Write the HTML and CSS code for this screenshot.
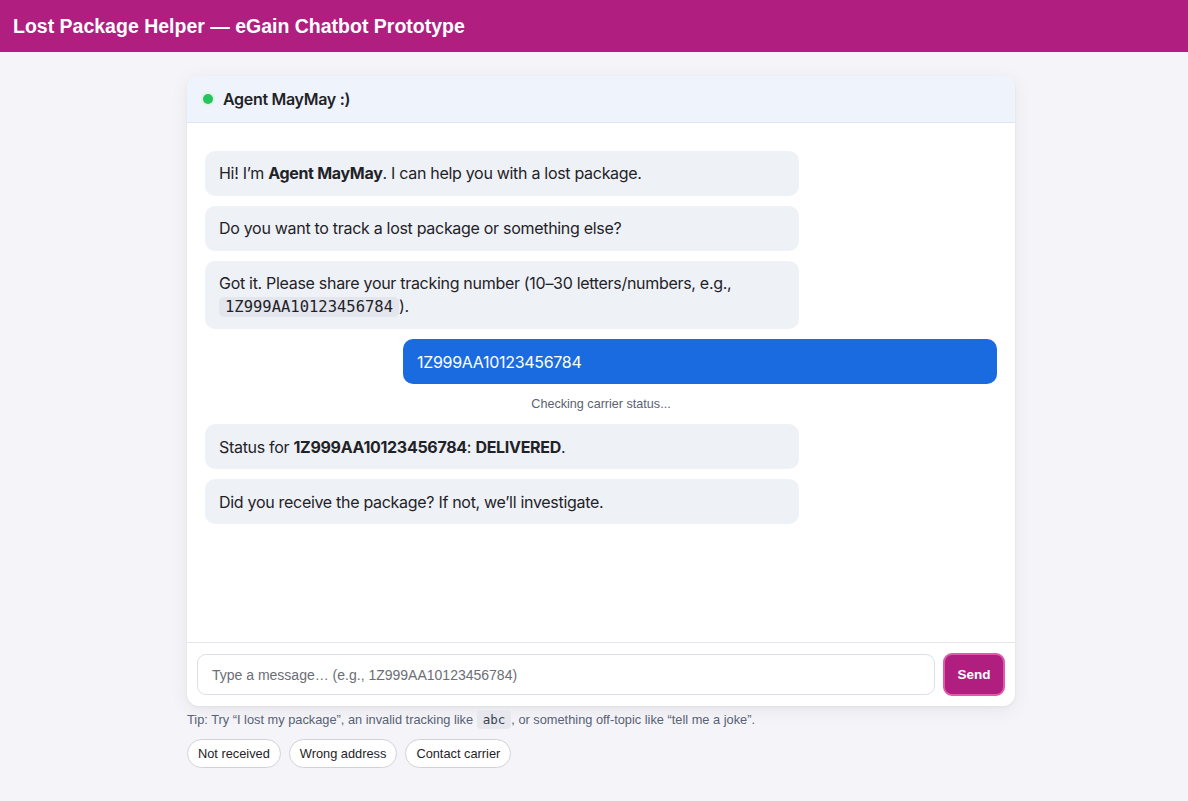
FILE: index.html
```html
<!DOCTYPE html>
<html lang="en">
<head>
<meta charset="utf-8">
<title>Lost Package Helper</title>
<link rel="stylesheet" href="styles.css">
</head>
<body>
<header class="topbar"><h1 class="title">Lost Package Helper — eGain Chatbot Prototype</h1></header>
<main class="main">
  <section class="card">
    <div class="card-head"><span class="dot"></span><span class="agent">Agent MayMay :)</span></div>
    <div class="messages">
      <div class="bubble bot">Hi! I’m <b>Agent MayMay</b>. I can help you with a lost package.</div>
      <div class="bubble bot">Do you want to track a lost package or something else?</div>
      <div class="bubble bot">Got it. Please share your tracking number (10–30 letters/numbers, e.g., <code class="code">1Z999AA10123456784</code>).</div>
      <div class="bubble user">1Z999AA10123456784</div>
      <div class="status">Checking carrier status...</div>
      <div class="bubble bot">Status for <b>1Z999AA10123456784</b>: <b>DELIVERED</b>.</div>
      <div class="bubble bot">Did you receive the package? If not, we’ll investigate.</div>
    </div>
    <form class="composer">
      <input class="input" type="text" placeholder="Type a message… (e.g., 1Z999AA10123456784)">
      <button class="send" type="button">Send</button>
    </form>
  </section>
  <p class="tip">Tip: Try “I lost my package”, an invalid tracking like <code class="tcode">abc</code>, or something off-topic like “tell me a joke”.</p>
  <div class="chips">
    <button class="chip" type="button">Not received</button>
    <button class="chip" type="button">Wrong address</button>
    <button class="chip" type="button">Contact carrier</button>
  </div>
</main>
</body>
</html>
```
FILE: styles.css
```css
* { box-sizing: border-box; }
html, body { margin: 0; padding: 0; }
body {
  background: #f5f5f9;
  font-family: Inter, "Liberation Sans", sans-serif;
  color: #1f2328;
}
.topbar {
  background: #b01f7f;
  height: 52px;
  display: flex;
  align-items: center;
  padding: 0 13px;
}
.title {
  margin: 0;
  color: #fff;
  font-family: "Liberation Sans", Arial, sans-serif;
  font-weight: 700;
  font-size: 19.5px;
  letter-spacing: 0;
}
.main {
  width: 828px;
  margin: 24px 0 0 187px;
}
.card {
  background: #fff;
  border-radius: 12px;
  box-shadow: 0 4px 18px rgba(30, 30, 60, 0.08), 0 1px 3px rgba(30,30,60,0.05);
  height: 630px;
  display: flex;
  flex-direction: column;
  overflow: hidden;
}
.card-head {
  background: #eff4fc;
  border-bottom: 1px solid #dbe6f7;
  height: 47px;
  display: flex;
  align-items: center;
  padding: 0 16px;
  gap: 10px;
}
.dot {
  width: 10px;
  height: 10px;
  border-radius: 50%;
  background: #22c55e;
  box-shadow: 0 0 0 2px #dff3e6;
}
.agent {
  font-weight: 600;
  font-size: 16px;
  letter-spacing: -0.3px;
  color: #1f2328;
}
.messages {
  flex: 1;
  padding: 28px 18px 18px;
  display: flex;
  flex-direction: column;
  gap: 10px;
}
.bubble {
  width: 75%;
  padding: 11.4px 14px;
  border-radius: 10px;
  font-size: 16px;
  line-height: 22.2px;
  letter-spacing: -0.3px;
}
.bot {
  background: #eef1f6;
  color: #1f2328;
}
.bot b { font-weight: 650; }
.user {
  align-self: flex-end;
  background: #1b6be0;
  color: #fff;
}
.code {
  font-family: "DejaVu Sans Mono", monospace;
  font-size: 15.5px;
  letter-spacing: 0;
  background: #e3e6ec;
  border-radius: 5px;
  padding: 1px 6px;
}
.status {
  font-family: "Liberation Sans", Arial, sans-serif;
  font-size: 12.6px;
  color: #5b6270;
  text-align: center;
  line-height: 20px;
}
.composer {
  border-top: 1px solid #e3e5ea;
  padding: 10px;
  display: flex;
  gap: 8px;
  align-items: center;
  margin: 0;
}
.input {
  flex: 1;
  height: 41px;
  border: 1px solid #dedfe4;
  border-radius: 9px;
  padding: 0 14px;
  font-family: "Liberation Sans", Arial, sans-serif;
  font-size: 14px;
  color: #1f2328;
  outline: none;
}
.input::placeholder { color: #6b6e76; }
.send {
  width: 62px;
  height: 43px;
  background: #b01f7f;
  border: 2px solid #e05aa8;
  border-radius: 9px;
  color: #fff;
  font-family: "Liberation Sans", Arial, sans-serif;
  font-weight: 700;
  font-size: 13.5px;
}
.tip {
  margin: 6px 0 0;
  font-family: "Liberation Sans", Arial, sans-serif;
  font-size: 12.8px;
  line-height: 16px;
  color: #586174;
}
.tcode {
  font-family: "DejaVu Sans Mono", monospace;
  font-size: 12.5px;
  background: #e6e8ee;
  border-radius: 4px;
  padding: 2px 6px;
  color: #3b4252;
}
.chips {
  display: flex;
  gap: 8px;
  margin-top: 11px;
}
.chip {
  height: 29px;
  padding: 0 10px;
  background: #fff;
  border: 1px solid #cfd2d8;
  border-radius: 15px;
  font-family: "Liberation Sans", Arial, sans-serif;
  font-size: 12.8px;
  color: #1f2328;
}
```
